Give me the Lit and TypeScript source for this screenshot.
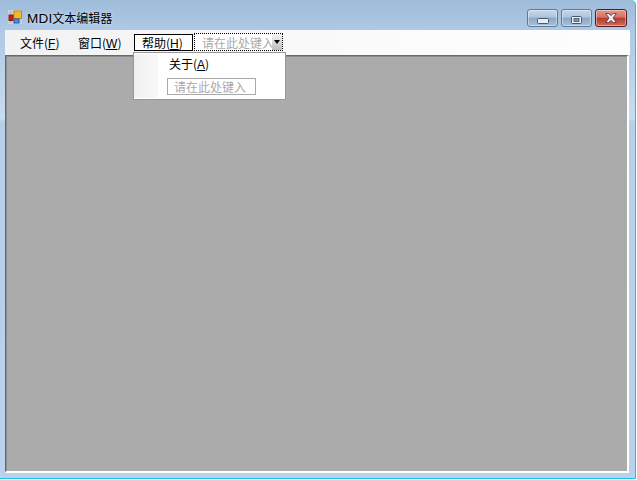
import { LitElement, html, css } from "lit";
import { customElement } from "lit/decorators.js";

@customElement("app-root")
export class AppRoot extends LitElement {
  static styles = css`
    :host { display: block; width: 637px; height: 480px; overflow: hidden; background: #fff; font-family: "Noto Sans CJK SC", "Liberation Sans", sans-serif; font-size: 12px; color: #000; }
    .win { width: 636px; height: 479px; box-sizing: border-box; display: flex; flex-direction: column; background: linear-gradient(180deg, #9ebbda 0, #aec9e5 30px, #c9dcf0 118px, #b7d0ea 122px, #b9d1ea 100%); border-right: 1px solid #17c5e0; border-bottom: 1px solid #17c5e0; border-top-right-radius: 5px; position: relative; }
    .title { height: 30px; flex: none; display: flex; align-items: center; padding: 4px 8px 0 8px; box-sizing: border-box; }
    .appicon { width: 14px; height: 14px; margin-right: 5px; flex: none; }
    .ttext { font-size: 12px; flex: 1; text-shadow: 0 0 4px rgba(255,255,255,.7); }
    .tlatin { font-family: "Liberation Sans", sans-serif; font-size: 13.5px; letter-spacing: .2px; }
    .btns { display: flex; gap: 3px; align-self: flex-start; margin-top: 5px; }
    .b { width: 31px; height: 18px; box-sizing: border-box; border: 1px solid #5f7a99; border-radius: 3px; display: flex; align-items: center; justify-content: center; background: linear-gradient(180deg, #c6d8ea 0, #aec5dd 45%, #8aa7c6 50%, #a9c1da 100%); box-shadow: inset 0 0 0 1px rgba(255,255,255,.4); }
    .b.close { width: 32px; border-color: #5a1b22; background: linear-gradient(180deg, #e3978c 0, #d27266 45%, #b43c2e 52%, #cf6d58 100%); }
    .body { flex: 1; display: flex; flex-direction: column; margin: 0 0 5px 5px; width: 625px; }
    .menu { height: 25px; flex: none; background: linear-gradient(90deg, #f2f2f2 0, #f6f6f6 30%, #fbfbfb 60%, #fdfdfd 100%); display: flex; align-items: flex-start; padding: 3px 0 0 3px; box-sizing: border-box; }
    .mi { height: 18px; width: 58px; box-sizing: border-box; padding: 1px 0 0 12px; line-height: 18px; white-space: nowrap; }
    .mi.active { width: 59px; height: 17px; margin: 1px 0 0 10px; border: 1px solid #000; background: #fff; padding: 0 0 0 7px; line-height: 16px; }
    .typehere { margin-left: 1px; height: 18px; width: 89px; box-sizing: border-box; border: 1px dotted #000; color: #a9a9a9; padding: 0 0 0 7px; line-height: 18px; white-space: nowrap; position: relative; background: #fff; }
    .arrow { position: absolute; right: 0; top: 0; width: 10px; height: 16px; background: linear-gradient(180deg, #f4f4f4, #bdbdbd); display: flex; align-items: center; justify-content: center; }
    .arrow::after { content: ""; border: 3px solid transparent; border-top: 4px solid #000; border-bottom: 0; }
    .mdi { flex: 1; background: #ababab; border-top: 1px solid #696969; border-left: 1px solid #696969; border-right: 2px solid #fff; border-bottom: 2px solid #fff; margin-right: 1px; box-sizing: border-box; box-shadow: inset 1px 1px 0 #8c8c8c; }
    .drop { position: absolute; left: 133px; top: 52px; width: 153px; height: 48px; box-sizing: border-box; border: 1px solid #979797; background: #fff; display: flex; }
    .gutter { width: 24px; margin: 1px 0; background: linear-gradient(90deg, #f1f1f1, #f8f8f8); flex: none; }
    .items { flex: 1; padding: 1px 0 0 9px; }
    .ditem { height: 20px; line-height: 20px; margin-left: 2px; white-space: nowrap; }
    .dinput { width: 89px; height: 17px; box-sizing: border-box; border: 1px solid #a9a9a9; color: #a9a9a9; margin-top: 4px; line-height: 15px; padding-left: 6px; white-space: nowrap; }
    u { text-underline-offset: 1px; }
    .latin { font-family: "Liberation Sans", sans-serif; }
  `;

  render() {
    return html`<div class="win">
      <div class="title">
        <svg class="appicon" viewBox="0 0 14 14" aria-hidden="true">
          <path d="M.5.5h13v13H.5zM4.5.5v13M9.5.5v13M.5 4.5h13M.5 9.5h13" fill="#b4c4d6" stroke="#cdd6e0" stroke-width="1"/>
          <rect x="6" y="1" width="7.5" height="7.5" fill="#f3b92f" stroke="#c08a1a" stroke-width="1"/>
          <rect x="1" y="5" width="4" height="5.5" fill="#c8211c" stroke="#8a1a14" stroke-width="1"/>
          <rect x="6" y="9" width="5" height="4" fill="#4a8fe6" stroke="#2a5aa0" stroke-width="1"/>
        </svg>
        <span class="ttext"><span class="tlatin">MDI</span>文本编辑器</span>
        <div class="btns">
          <div class="b"><svg width="12" height="6" viewBox="0 0 12 6" style="margin-top:6px"><rect x=".5" y=".5" width="11" height="5" rx="1" fill="#e9eef4" stroke="#47586d"/></svg></div>
          <div class="b"><svg width="11" height="8" viewBox="0 0 11 8" style="margin-top:4px"><rect x=".5" y=".5" width="10" height="7" rx="1" fill="#e9eef4" stroke="#47586d"/><rect x="3" y="2.500" width="5" height="3" fill="#7d93ad" stroke="#47586d" stroke-width=".8"/></svg></div>
          <div class="b close"><svg width="12" height="10" viewBox="0 0 12 10"><path d="M.7.5h3l2.300 2 2.300-2h3L8 5l3.300 4.500h-3L6 7.500l-2.300 2h-3L4 5z" fill="#eceff3" stroke="#6a2a2a" stroke-width=".8"/></svg></div>
        </div>
      </div>
      <div class="body">
        <div class="menu">
          <div class="mi">文件(<u class="latin">F</u>)</div>
          <div class="mi">窗口(<u class="latin">W</u>)</div>
          <div class="mi active">帮助(<u class="latin">H</u>)</div>
          <div class="typehere">请在此处键入<span class="arrow"></span></div>
        </div>
        <div class="mdi"></div>
      </div>
      <div class="drop">
        <div class="gutter"></div>
        <div class="items">
          <div class="ditem">关于(<u class="latin">A</u>)</div>
          <div class="dinput">请在此处键入</div>
        </div>
      </div>
    </div>`;
  }
}
